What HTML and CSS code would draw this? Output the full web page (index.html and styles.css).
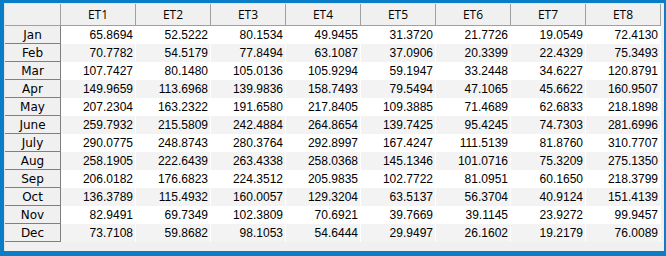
FILE: index.html
```html
<!DOCTYPE html>
<html>
<head>
<meta charset="utf-8">
<link rel="stylesheet" href="styles.css">
</head>
<body>
<div class="frame">
  <div class="panel">
    <div class="grid" id="grid">
      <div class="corner"></div>
      <div class="colhead">ET1</div><div class="colhead">ET2</div><div class="colhead">ET3</div><div class="colhead">ET4</div><div class="colhead">ET5</div><div class="colhead">ET6</div><div class="colhead">ET7</div><div class="colhead">ET8</div>

      <div class="rowhead">Jan</div><div class="cell">65.8694</div><div class="cell">52.5222</div><div class="cell">80.1534</div><div class="cell">49.9455</div><div class="cell">31.3720</div><div class="cell">21.7726</div><div class="cell">19.0549</div><div class="cell">72.4130</div>
      <div class="rowhead">Feb</div><div class="cell alt">70.7782</div><div class="cell alt">54.5179</div><div class="cell alt">77.8494</div><div class="cell alt">63.1087</div><div class="cell alt">37.0906</div><div class="cell alt">20.3399</div><div class="cell alt">22.4329</div><div class="cell alt">75.3493</div>
      <div class="rowhead">Mar</div><div class="cell">107.7427</div><div class="cell">80.1480</div><div class="cell">105.0136</div><div class="cell">105.9294</div><div class="cell">59.1947</div><div class="cell">33.2448</div><div class="cell">34.6227</div><div class="cell">120.8791</div>
      <div class="rowhead">Apr</div><div class="cell alt">149.9659</div><div class="cell alt">113.6968</div><div class="cell alt">139.9836</div><div class="cell alt">158.7493</div><div class="cell alt">79.5494</div><div class="cell alt">47.1065</div><div class="cell alt">45.6622</div><div class="cell alt">160.9507</div>
      <div class="rowhead">May</div><div class="cell">207.2304</div><div class="cell">163.2322</div><div class="cell">191.6580</div><div class="cell">217.8405</div><div class="cell">109.3885</div><div class="cell">71.4689</div><div class="cell">62.6833</div><div class="cell">218.1898</div>
      <div class="rowhead">June</div><div class="cell alt">259.7932</div><div class="cell alt">215.5809</div><div class="cell alt">242.4884</div><div class="cell alt">264.8654</div><div class="cell alt">139.7425</div><div class="cell alt">95.4245</div><div class="cell alt">74.7303</div><div class="cell alt">281.6996</div>
      <div class="rowhead">July</div><div class="cell">290.0775</div><div class="cell">248.8743</div><div class="cell">280.3764</div><div class="cell">292.8997</div><div class="cell">167.4247</div><div class="cell">111.5139</div><div class="cell">81.8760</div><div class="cell">310.7707</div>
      <div class="rowhead">Aug</div><div class="cell alt">258.1905</div><div class="cell alt">222.6439</div><div class="cell alt">263.4338</div><div class="cell alt">258.0368</div><div class="cell alt">145.1346</div><div class="cell alt">101.0716</div><div class="cell alt">75.3209</div><div class="cell alt">275.1350</div>
      <div class="rowhead">Sep</div><div class="cell">206.0182</div><div class="cell">176.6823</div><div class="cell">224.3512</div><div class="cell">205.9835</div><div class="cell">102.7722</div><div class="cell">81.0951</div><div class="cell">60.1650</div><div class="cell">218.3799</div>
      <div class="rowhead">Oct</div><div class="cell alt">136.3789</div><div class="cell alt">115.4932</div><div class="cell alt">160.0057</div><div class="cell alt">129.3204</div><div class="cell alt">63.5137</div><div class="cell alt">56.3704</div><div class="cell alt">40.9124</div><div class="cell alt">151.4139</div>
      <div class="rowhead">Nov</div><div class="cell">82.9491</div><div class="cell">69.7349</div><div class="cell">102.3809</div><div class="cell">70.6921</div><div class="cell">39.7669</div><div class="cell">39.1145</div><div class="cell">23.9272</div><div class="cell">99.9457</div>
      <div class="rowhead">Dec</div><div class="cell alt">73.7108</div><div class="cell alt">59.8682</div><div class="cell alt">98.1053</div><div class="cell alt">54.6444</div><div class="cell alt">29.9497</div><div class="cell alt">26.1602</div><div class="cell alt">19.2179</div><div class="cell alt">76.0089</div>
    </div>
  </div>
</div>
</body>
</html>
```

FILE: styles.css
```css
html, body {
  margin: 0;
  padding: 0;
}
body {
  width: 666px;
  height: 256px;
  background: #0b7cc6;
  overflow: hidden;
}
.frame {
  box-sizing: border-box;
  width: 666px;
  height: 256px;
  padding: 3px 2px 5px 4px;
}
.panel {
  box-sizing: border-box;
  width: 660px;
  height: 248px;
  background: #f0f0f0;
  border-top: 1px solid #e3e3e3;
  border-left: 1px solid #e3e3e3;
}
.grid {
  display: grid;
  grid-template-columns: 56px repeat(8, 75px);
  grid-template-rows: 22px repeat(12, 18px);
}
.grid > div {
  box-sizing: border-box;
  white-space: nowrap;
  overflow: hidden;
}
.corner {
  background: #f0f0f0;
  border-right: 1px solid #a0a0a0;
  border-bottom: 1px solid #a0a0a0;
}
.colhead {
  background: #f0f0f0;
  border-right: 1px solid #a0a0a0;
  border-bottom: 1px solid #a0a0a0;
  font-family: "Open Sans", "Noto Sans", sans-serif;
  font-size: 12px;
  color: #000;
  display: flex;
  align-items: center;
  justify-content: center;
  padding-bottom: 1px;
}
.rowhead {
  background: #f0f0f0;
  border-right: 1px solid #7f7f7f;
  border-bottom: 1px solid #7f7f7f;
  font-family: "DejaVu Sans", sans-serif;
  font-size: 12px;
  color: #000;
  display: flex;
  align-items: center;
  justify-content: center;
}
.cell {
  background: #ffffff;
  border-right: 1px solid #ffffff;
  font-family: "Liberation Sans", Arial, sans-serif;
  font-size: 12px;
  color: #000;
  text-align: right;
  padding-right: 2px;
  line-height: 18px;
}
.cell.alt {
  background: #f3f3f3;
}
```
